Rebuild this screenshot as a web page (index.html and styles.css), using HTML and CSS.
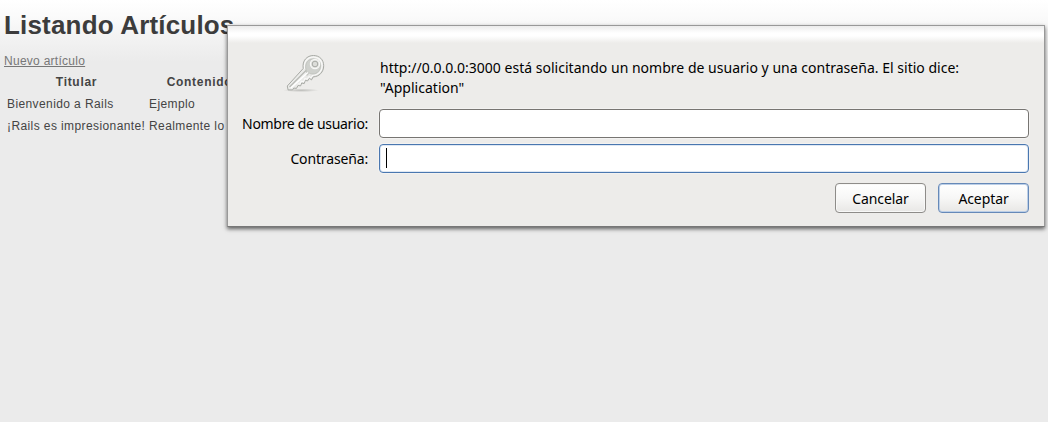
FILE: index.html
```html
<!DOCTYPE html>
<html lang="es">
<head>
<meta charset="utf-8">
<title>Listando Artículos</title>
<link rel="stylesheet" href="styles.css">
</head>
<body>
<main class="page">
  <h1 class="title">Listando Artículos</h1>
  <a class="new-link">Nuevo artículo</a>
  <table class="articles">
    <thead><tr><th class="col-title">Titular</th><th>Contenido</th></tr></thead>
    <tbody>
      <tr><td>Bienvenido a Rails</td><td>Ejemplo</td></tr>
      <tr><td>¡Rails es impresionante!</td><td>Realmente lo es</td></tr>
    </tbody>
  </table>
</main>
<form class="dialog">
  <div class="intro">
    <svg class="key" viewBox="0 0 50 48" width="50" height="48">
      <defs>
        <linearGradient id="metal" x1="0" y1="0" x2="1" y2="1">
          <stop offset="0" stop-color="#d4d5d2"/><stop offset=".5" stop-color="#eeeeec"/><stop offset="1" stop-color="#c9cac7"/>
        </linearGradient>
        <radialGradient id="floor"><stop offset="0" stop-color="#8c8d89" stop-opacity=".5"/><stop offset="1" stop-color="#8c8d89" stop-opacity="0"/></radialGradient>
      </defs>
      <ellipse cx="21" cy="40.3" rx="18" ry="1.8" fill="url(#floor)"/>
      <path d="M23.2 18.5C22 10.5 27 5.5 33.5 5.5c6 0 10.200 4.200 10.200 10.200 0 6.500-4.700 11-10.500 11.200l-1.700 3-2-1.600-2 2.700-2.100-.7-1.200 3.300-2.500-.6-1.100 2.900-2.600-.4-1.500 2.900-2.700-.3-1.300 1.800H8.100L7.300 36z" fill="url(#metal)" stroke="#a8aaa5" stroke-width="1" stroke-linejoin="round"/>
      <path d="M24.600 19C23.500 11.500 27.500 7 33.500 7c5.200 0 8.700 3.500 8.700 8.700 0 5.500-4 9.500-9.500 9.700l-1.800 2.300-1.700-1.300-2.300 2.700-2-.6-1.300 3.100-2.400-.5-1.200 2.900-2.500-.3" fill="none" stroke="#fafaf9" stroke-width="1.100"/>
      <path d="M25.800 19c-1-6 2.400-10.200 7.600-10.200 4.200 0 7.200 2.800 7.200 7 0 4.600-3.300 8-7.700 8.200-2.500.1-3.500-1-3.500-1L27 25.500z" fill="#cfd1cd" stroke="#b8bab5" stroke-width=".7"/>
      <path d="M9.500 37 26 20.500" stroke="#b8bab5" stroke-width="1.200"/>
      <path d="m10.800 38 17-15.500" stroke="#fff" stroke-width="1.300"/>
      <circle cx="35" cy="14" r="4.600" fill="#e4e5e2" stroke="#f8f8f7" stroke-width="1.200"/>
      <circle cx="35" cy="14" r="2.800" fill="#dcddd9" stroke="#a8aaa5" stroke-width="1"/>
    </svg>
    <p class="message">http://0.0.0.0:3000 está solicitando un nombre de usuario y una contraseña. El sitio dice:<br>"Application"</p>
  </div>
  <div class="field"><label class="label-user">Nombre de usuario:</label><div class="input"></div></div>
  <div class="field"><label>Contraseña:</label><div class="input focused"><span class="caret"></span></div></div>
  <div class="actions">
    <button type="button" class="btn">Cancelar</button>
    <button type="button" class="btn default">Aceptar</button>
  </div>
</form>
</body>
</html>
```
FILE: styles.css
```css
* { box-sizing: border-box; }
html { height: 100%; background: #ebebeb; }
body {
  margin: 0;
  height: 422px;
  overflow: hidden;
  background: linear-gradient(#fff 0, #fafafa 18px, #f3f3f3 36px, #ebebeb 62px);
  font: 12px/18px "Liberation Sans", Arial, sans-serif;
  color: #444;
}
.page { padding: 7px 4px; width: 260px; }
.title { margin: 0; font-size: 26px; line-height: 36px; color: #3c3c3c; white-space: nowrap; letter-spacing: .18px; }
.new-link { display: block; width: max-content; margin-top: 9px; color: #777; text-decoration: underline; letter-spacing: .27px; }
.articles { border-spacing: 2px; table-layout: fixed; width: 248px; }
.articles th, .articles td { padding: 1px; height: 20px; white-space: nowrap; text-align: left; letter-spacing: .4px; }
.articles th { text-align: center; letter-spacing: .7px; padding-left: 2px; }
.articles .col-title { width: 140px; }

.dialog {
  position: absolute;
  left: 227px;
  top: 25px;
  width: 818px;
  height: 202px;
  padding: 25px 15px 0 14px;
  border: 1px solid #999;
  border-bottom-color: #777;
  background: linear-gradient(#ececec 0, #fff 7px, #fff 10px, #edecea 17px);
  box-shadow: 0 2px 4px rgba(0, 0, 0, .6);
  font: 14px/20px "Noto Sans", "Open Sans", sans-serif;
  color: #000;
}
.intro { display: flex; height: 58px; }
.key { flex: none; margin: -1px 0 0 38px; }
.message { margin: 7px 0 0 50px; white-space: nowrap; letter-spacing: .015px; }
.field { display: grid; grid-template-columns: 126px 650px; column-gap: 11px; align-items: center; height: 29px; margin-bottom: 6px; }
.field label { text-align: right; white-space: nowrap; letter-spacing: -.15px; }
.field .label-user { letter-spacing: -.31px; }
.input { height: 29px; padding: 5px 6px; border: 1px solid #777572; border-radius: 4px; background: #fff; box-shadow: 0 0 0 1px #f3f2f1; }
.input.focused { border-color: #4a77b0; box-shadow: inset 0 0 0 1px #dfe8f3, 0 0 0 1px #f3f2f1; }
.caret { display: block; width: 1px; height: 20px; margin-top: -2px; background: #000; }
.actions { display: flex; justify-content: flex-end; gap: 12px; margin-top: 10px; }
.btn {
  width: 91px;
  height: 30px;
  padding: 1px 0 0;
  border: 1px solid #8e8c89;
  border-radius: 4px;
  background: linear-gradient(#fff, #f7f7f6 50%, #e8e7e5);
  box-shadow: inset 0 0 0 1px #f8f8f7;
  font: inherit;
  letter-spacing: -.1px;
  color: #000;
}
.btn.default { border-color: #6689b8; box-shadow: inset 0 0 0 1px #bccfe7; }
```
